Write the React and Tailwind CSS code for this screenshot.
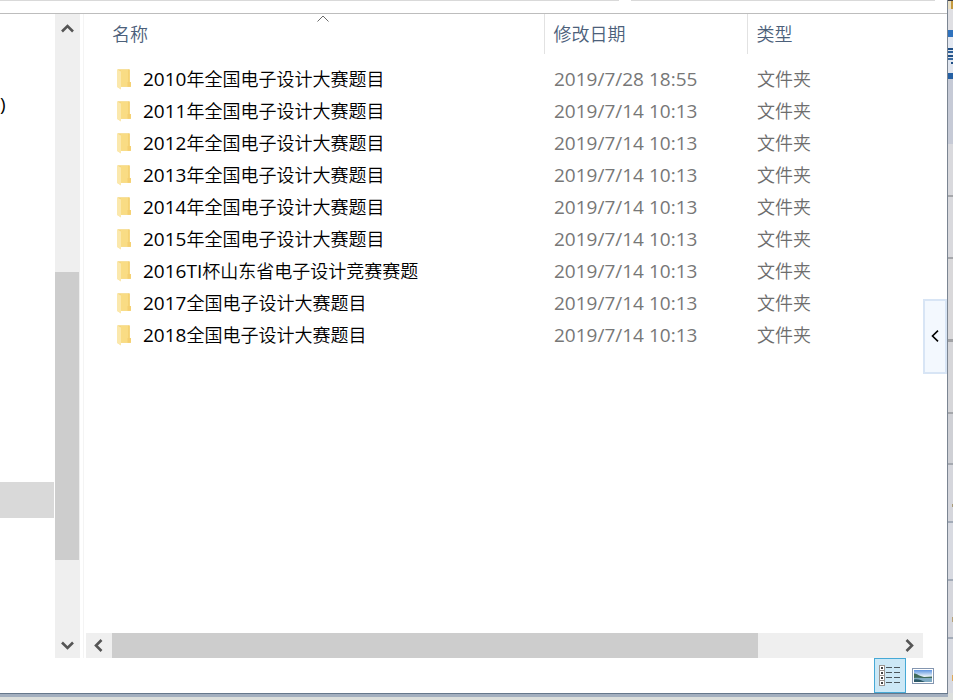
import { useState } from 'react'

const folders = [
  { year: '2010', name: '年全国电子设计大赛题目', date: '2019/7/28 18:55' },
  { year: '2011', name: '年全国电子设计大赛题目', date: '2019/7/14 10:13' },
  { year: '2012', name: '年全国电子设计大赛题目', date: '2019/7/14 10:13' },
  { year: '2013', name: '年全国电子设计大赛题目', date: '2019/7/14 10:13' },
  { year: '2014', name: '年全国电子设计大赛题目', date: '2019/7/14 10:13' },
  { year: '2015', name: '年全国电子设计大赛题目', date: '2019/7/14 10:13' },
  { year: '2016TI', name: '杯山东省电子设计竞赛赛题', date: '2019/7/14 10:13' },
  { year: '2017', name: '全国电子设计大赛题目', date: '2019/7/14 10:13' },
  { year: '2018', name: '全国电子设计大赛题目', date: '2019/7/14 10:13' },
]

// edge of the window behind this one, from top to bottom
const backdrop = [
  'h-px bg-[#3a3a40]',
  'h-[8px] bg-[#e9dfc4] border-r-2 border-[#c59a3e]',
  'h-[21px] bg-[#dfdfe3]',
  'h-[7px] bg-[#2f72bd]',
  'h-[11px] bg-[#e3e8f1]',
  'h-[2px] bg-[#1f4f86]',
  'h-px bg-[#dfe6f0]',
  'h-[2px] bg-[#2c5f98]',
  'h-[2px] bg-[#dfe6f0]',
  'h-[2px] bg-[#1f4f86]',
  'h-px bg-[#dfe6f0]',
  'h-[2px] bg-[#3b6a9f]',
  'h-[2px] bg-[#dfe6f0]',
  'h-[2px] bg-[#dfe6f0] border-r-2 border-[#1f4f86]',
  'h-[9px] bg-[#e0e5ee]',
  'h-[6px] bg-[#2560a3]',
  'h-[65px] bg-[#c6cad6]',
  'h-[51px] bg-[#d9d9dd]',
  'h-[2px] bg-[#a5a7ab]',
  'h-[60px] bg-[#d9d9dd]',
  'h-[2px] bg-[#a5a7ab]',
  'h-[80px] bg-[#d9d8da]',
  'h-[3px] bg-[#a2a3a6]',
  'h-[70px] bg-[#d6d6d9]',
  'h-[2px] bg-[#a5a7ab]',
  'h-[49px] bg-[#cfd0d5]',
  'h-[2px] bg-[#a5a9b0]',
  'h-[39px] bg-[#d5d6dc]',
  'h-[3px] bg-[#d5d6dc] border-r border-[#a89a78]',
  'h-[14px] bg-[#d5d6dc]',
  'h-[2px] bg-[#a3abb8]',
  'h-[56px] bg-[#d8dae1]',
  'h-[2px] bg-[#a3abb8]',
  'h-[36px] bg-[#d5d6dc]',
  'h-[5px] bg-[#d5d6dc] border-r border-[#b5a27a]',
  'h-[15px] bg-[#d5d6dc]',
  'h-[2px] bg-[#a3abb8]',
  'h-[36px] bg-[#d8dae1]',
  'h-[6px] bg-[#d8dae1] border-r border-[#dfa95a]',
  'grow bg-[#d8dae1]',
]

const arrows = {
  up: 'M1 9.5 L6.5 4 L12 9.5',
  down: 'M1 3.5 L6.5 9 L12 3.5',
  left: 'M9.5 1 L4 6.5 L9.5 12',
  right: 'M3.5 1 L9 6.5 L3.5 12',
}

function Arrow({ dir }) {
  return (
    <svg width="14" height="14" viewBox="0 0 14 14" fill="none" stroke="#555555" strokeWidth="2.6" aria-hidden="true">
      <path d={arrows[dir]} />
    </svg>
  )
}

function FolderIcon() {
  return (
    <svg width="14" height="21" viewBox="0 0 14 21" className="shrink-0" aria-hidden="true">
      <path d="M0.5 0.2 H12.5 V13 H13.8 V17.8 H4 V20.3 L0.5 18 Z" fill="#f5d67c" />
      <path d="M4 1 H12.5 V13 H13.8 V17.8 H4 Z" fill="#f9dc84" />
      <path d="M0 0.4 L4 2.6 V20.4 L0 18 Z" fill="#fbe8ac" />
      <path d="M12 0.5 V13" stroke="#f0c963" />
      <path d="M10.5 13 H13.8 V17.8 H10.5 Z" fill="#f4cf70" />
    </svg>
  )
}

function DetailsIcon() {
  return (
    <svg width="22" height="22" viewBox="0 0 22 22" aria-hidden="true">
      {[1, 6, 11, 16].map((y) => (
        <g key={y}>
          <rect x="0.5" y={y - 0.5} width="5" height="5" fill="#ffffff" stroke="#9a9490" />
          <rect x="2" y={y + 1} width="2" height="2" fill="#444444" />
          <path d={`M7 ${y + 1.5} H13 M15 ${y + 1.5} H21`} stroke="#4c565c" />
        </g>
      ))}
    </svg>
  )
}

function PictureIcon() {
  return (
    <svg width="22" height="16" viewBox="0 0 22 16" aria-hidden="true">
      <defs>
        <linearGradient id="sky" x1="0" y1="0" x2="0" y2="1">
          <stop offset="0" stopColor="#5b93e0" />
          <stop offset="0.55" stopColor="#eef6fb" />
        </linearGradient>
      </defs>
      <rect x="0.5" y="0.5" width="21" height="15" fill="#ffffff" stroke="#8496b0" />
      <rect x="2" y="2" width="18" height="12" fill="url(#sky)" />
      <path d="M2 5.5 C5 5.5 7 8 12 9 L20 8.5 V10.5 H2 Z" fill="#3f6a5a" />
      <path d="M2 10 C8 9.5 14 10.5 20 10 V14 H2 Z" fill="#7fabc4" />
      <path d="M2 11.5 C6 10.5 9 12 13 14 H2 Z" fill="#2c5a68" />
    </svg>
  )
}

function NavPane() {
  return (
    <nav className="w-[54px] shrink-0 overflow-hidden text-[19px]">
      <div className="mt-[72px] flex h-9 items-center">)</div>
      <div className="mt-[360px] h-9 bg-[#d9d9d9]" />
    </nav>
  )
}

function VerticalScrollbar() {
  return (
    <div className="ml-px flex w-[25px] shrink-0 flex-col bg-[#efefef]">
      <button aria-label="向上滚动" className="flex h-[30px] items-center justify-center"><Arrow dir="up" /></button>
      <div className="grow pt-[228px]">
        <div className="h-72 w-6 bg-[#cdcdcd]" />
      </div>
      <button aria-label="向下滚动" className="flex h-6 items-center justify-center"><Arrow dir="down" /></button>
    </div>
  )
}

function HorizontalScrollbar() {
  return (
    <div className="flex h-[25px] shrink-0 bg-[#efefef]">
      <button aria-label="向左滚动" className="flex w-[26px] items-center justify-center"><Arrow dir="left" /></button>
      <div className="grow">
        <div className="h-full w-14/17 bg-[#cdcdcd]" />
      </div>
      <button aria-label="向右滚动" className="flex w-[26px] items-center justify-center"><Arrow dir="right" /></button>
    </div>
  )
}

function FileTable() {
  return (
    <table className="w-full table-fixed text-left text-lg leading-8">
      <colgroup>
        <col className="w-[442px]" />
        <col className="w-[203px]" />
        <col />
      </colgroup>
      <thead className="text-[#4c607a]">
        <tr className="h-10">
          <th className="relative p-0 pl-[10px] font-[350]">
            名称
            <svg width="12" height="7" viewBox="0 0 12 7" fill="none" stroke="#6a6a6a" className="absolute top-px left-1/2 -translate-x-1/2" aria-hidden="true">
              <path d="M0.5 6.5 L6 1 L11.5 6.5" />
            </svg>
          </th>
          <th className="border-l border-[#e2e2e2] p-0 pl-[9px] font-[350]">修改日期</th>
          <th className="border-l border-[#e2e2e2] p-0 pl-[9px] font-[350]">类型</th>
        </tr>
      </thead>
      <tbody className="font-[350] text-[#6d6d6d] before:block before:h-[9px]">
        {folders.map((folder) => (
          <tr key={folder.year} className="h-8">
            <td className="p-0 pl-[15px]">
              <div className="flex h-8 items-center gap-3 whitespace-nowrap text-black">
                <FolderIcon />
                <span><span className="text-[19px] font-normal">{folder.year}</span>{folder.name}</span>
              </div>
            </td>
            <td className="p-0 pl-[10px] text-[19px] leading-8 font-normal text-[#777777]">{folder.date}</td>
            <td className="p-0 pl-[10px]">文件夹</td>
          </tr>
        ))}
      </tbody>
    </table>
  )
}

export default function App() {
  const [view, setView] = useState('details')

  return (
    <div className="flex h-screen flex-col overflow-hidden bg-[#dcdfdc] font-['Open_Sans','Noto_Sans_CJK_SC',sans-serif] text-black">
      <div className="flex min-h-0 grow">
        <div className="flex min-w-0 grow flex-col border-r border-[#7b8592] bg-white">
          {/* Address bar and search box */}
          <div className="flex h-[13px] shrink-0 gap-3 pr-3">
            <div className="h-px grow bg-[#d9d9d9]" />
            <div className="h-px w-[304px] bg-[#d9d9d9]" />
          </div>

          <div className="flex min-h-0 grow border-t border-[#bdbdbd]">
            <NavPane />
            <VerticalScrollbar />
            <main className="ml-[3px] flex min-w-0 grow flex-col border-l border-[#f4f4f4] pl-[2px]">
              <div className="min-h-0 grow overflow-hidden pl-4">
                <FileTable />
              </div>
              <HorizontalScrollbar />
            </main>
            <div className="flex w-6 shrink-0 items-center">
              <button aria-label="展开预览" className="flex h-[75px] w-full items-center justify-center border-2 border-[#d8e5f5] bg-[#f3f8fe]">
                <svg width="8" height="12" viewBox="0 0 8 12" fill="none" stroke="#000000" strokeWidth="1.6" aria-hidden="true">
                  <path d="M7 0.7 L1.5 6 L7 11.3" />
                </svg>
              </button>
            </div>
          </div>

          {/* Status bar */}
          <div className="flex h-[35px] shrink-0 justify-end pr-2">
            <button
              aria-label="详细信息"
              aria-pressed={view === 'details'}
              onClick={() => setView('details')}
              className="flex w-8 items-center justify-center border border-[#46a9d6] bg-[#cce8f6]"
            >
              <DetailsIcon />
            </button>
            <button
              aria-label="大缩略图"
              aria-pressed={view === 'thumbs'}
              onClick={() => setView('thumbs')}
              className="flex w-[33px] items-center justify-center"
            >
              <PictureIcon />
            </button>
          </div>
        </div>

        <div className="flex w-[5px] shrink-0 flex-col overflow-hidden">
          {backdrop.map((band, i) => (
            <div key={i} className={band} />
          ))}
        </div>
      </div>
      <div className="mr-[5px] h-1 shrink-0 border-t border-[#66788c] bg-[#a3afbf]" />
      <div className="h-[3px] shrink-0" />
    </div>
  )
}
